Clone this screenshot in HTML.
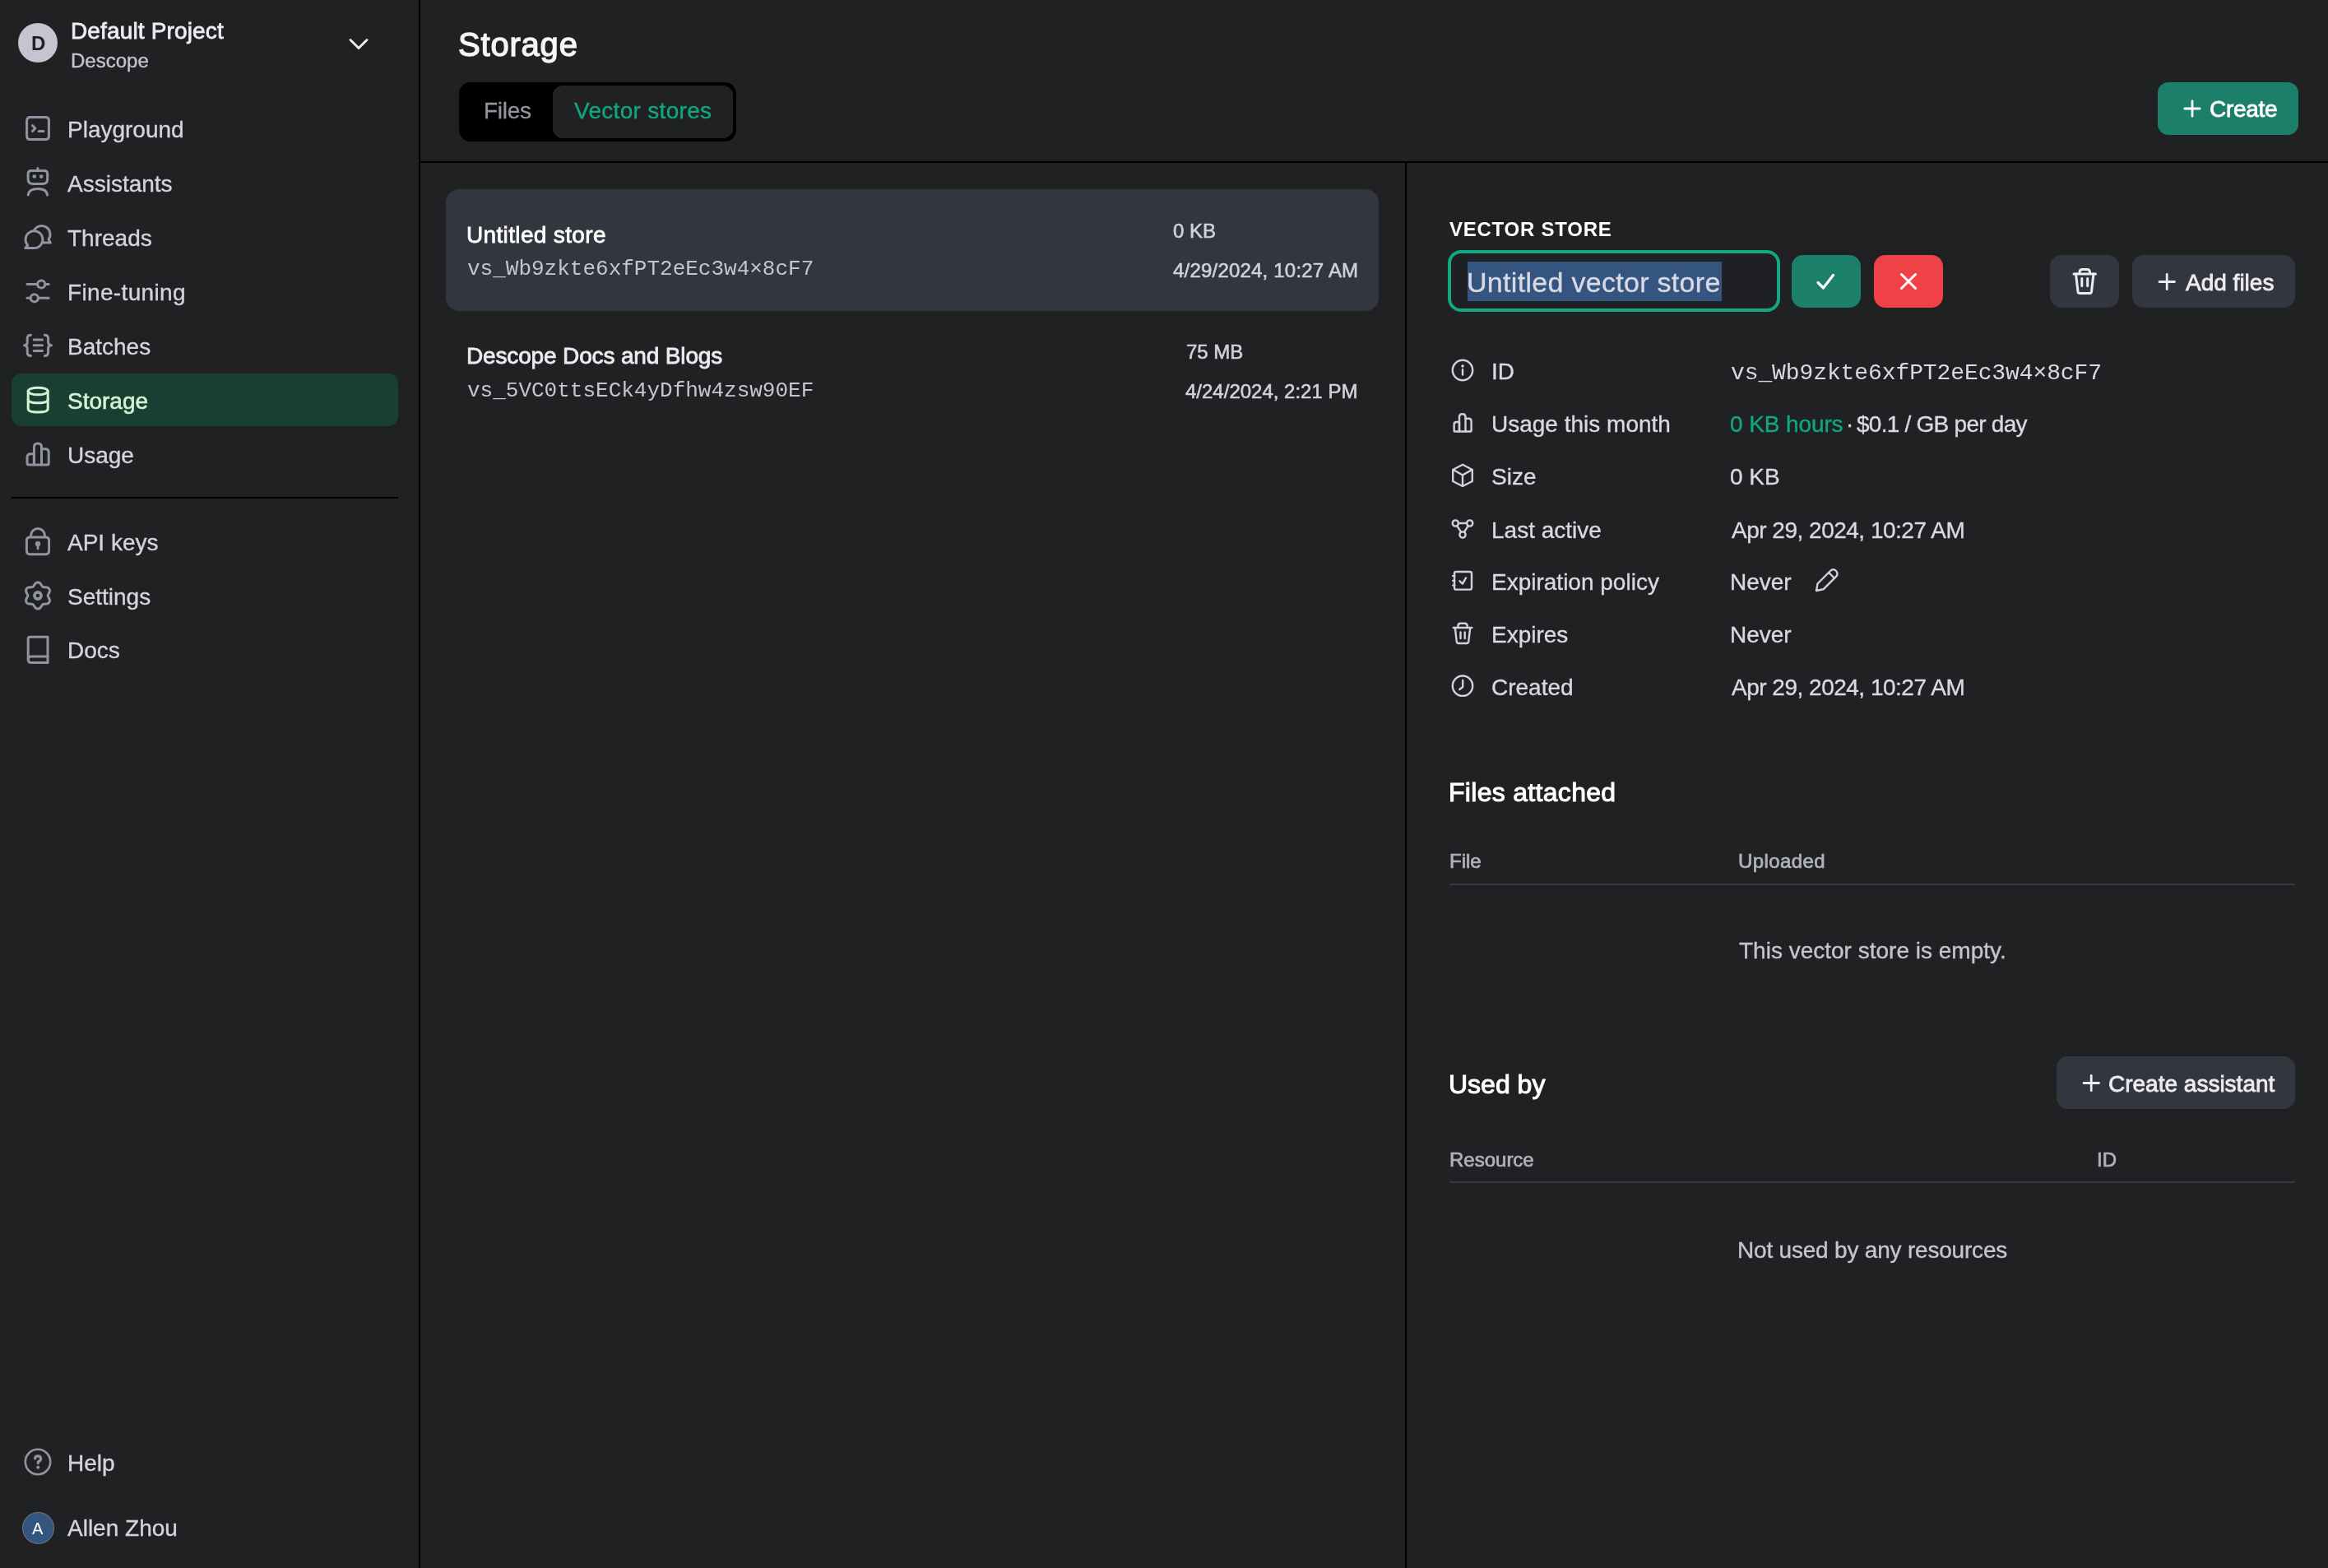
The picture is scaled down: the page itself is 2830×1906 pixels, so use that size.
<!DOCTYPE html>
<html><head><meta charset="utf-8"><title>Storage</title>
<style>
html,body{margin:0;padding:0;}
body{width:2830px;height:1906px;background:#202123;position:relative;overflow:hidden;font-family:"Liberation Sans",sans-serif;}
.t{position:absolute;white-space:nowrap;line-height:1;will-change:transform;}
.r{position:absolute;}
svg{position:absolute;left:0;top:0;}
</style></head><body>
<div class="r" style="left:509px;top:0px;width:2px;height:1906px;background:#000;border-radius:0px;"></div>
<div class="r" style="left:511px;top:196px;width:2319px;height:2px;background:#000;border-radius:0px;"></div>
<div class="r" style="left:1708px;top:198px;width:2px;height:1708px;background:#000;border-radius:0px;"></div>
<div class="r" style="left:22px;top:28px;width:48px;height:48px;border-radius:50%;background:#c5c5d2;"></div>
<div class="t" style="left:38.0px;top:40.7px;font-size:24px;color:#202123;font-weight:700;font-family:'Liberation Sans', sans-serif;">D</div>
<div class="t" style="left:86.0px;top:24.0px;font-size:28px;color:#ececf1;font-weight:400;font-family:'Liberation Sans', sans-serif;letter-spacing:0.15px;-webkit-text-stroke:0.8px #ececf1;">Default Project</div>
<div class="t" style="left:86.0px;top:61.5px;font-size:24px;color:#c5c5d2;font-weight:400;font-family:'Liberation Sans', sans-serif;-webkit-text-stroke:0.35px #c5c5d2;">Descope</div>
<div class="r" style="left:14px;top:454px;width:470px;height:64px;background:#193f32;border-radius:12px;"></div>
<div class="t" style="left:82.0px;top:144.4px;font-size:28px;color:#d4d4de;font-weight:400;font-family:'Liberation Sans', sans-serif;-webkit-text-stroke:0.35px #d4d4de;">Playground</div>
<div class="t" style="left:82.0px;top:209.9px;font-size:28px;color:#d4d4de;font-weight:400;font-family:'Liberation Sans', sans-serif;-webkit-text-stroke:0.35px #d4d4de;">Assistants</div>
<div class="t" style="left:82.0px;top:275.9px;font-size:28px;color:#d4d4de;font-weight:400;font-family:'Liberation Sans', sans-serif;-webkit-text-stroke:0.35px #d4d4de;">Threads</div>
<div class="t" style="left:82.0px;top:341.9px;font-size:28px;color:#d4d4de;font-weight:400;font-family:'Liberation Sans', sans-serif;letter-spacing:0.35px;-webkit-text-stroke:0.35px #d4d4de;">Fine-tuning</div>
<div class="t" style="left:82.0px;top:407.9px;font-size:28px;color:#d4d4de;font-weight:400;font-family:'Liberation Sans', sans-serif;-webkit-text-stroke:0.35px #d4d4de;">Batches</div>
<div class="t" style="left:82.0px;top:473.9px;font-size:28px;color:#d2f4d3;font-weight:400;font-family:'Liberation Sans', sans-serif;-webkit-text-stroke:0.6px #d2f4d3;">Storage</div>
<div class="t" style="left:82.0px;top:539.9px;font-size:28px;color:#d4d4de;font-weight:400;font-family:'Liberation Sans', sans-serif;-webkit-text-stroke:0.35px #d4d4de;">Usage</div>
<div class="t" style="left:82.0px;top:645.9px;font-size:28px;color:#d4d4de;font-weight:400;font-family:'Liberation Sans', sans-serif;-webkit-text-stroke:0.35px #d4d4de;">API keys</div>
<div class="t" style="left:82.0px;top:711.6px;font-size:28px;color:#d4d4de;font-weight:400;font-family:'Liberation Sans', sans-serif;-webkit-text-stroke:0.35px #d4d4de;">Settings</div>
<div class="t" style="left:82.0px;top:777.3px;font-size:28px;color:#d4d4de;font-weight:400;font-family:'Liberation Sans', sans-serif;-webkit-text-stroke:0.35px #d4d4de;">Docs</div>
<div class="t" style="left:82.0px;top:1764.9px;font-size:28px;color:#d4d4de;font-weight:400;font-family:'Liberation Sans', sans-serif;-webkit-text-stroke:0.35px #d4d4de;">Help</div>
<div class="t" style="left:82.0px;top:1843.8px;font-size:28px;color:#d4d4de;font-weight:400;font-family:'Liberation Sans', sans-serif;-webkit-text-stroke:0.35px #d4d4de;">Allen Zhou</div>
<div class="r" style="left:14px;top:604px;width:470px;height:2px;background:#000;border-radius:0px;"></div>
<div class="r" style="left:26.5px;top:1837.5px;width:39px;height:39px;border-radius:50%;background:#34557e;box-shadow:inset 0 0 0 1px #6b6b78;"></div>
<div class="t" style="left:39.0px;top:1848.1px;font-size:20px;color:#ffffff;font-weight:400;font-family:'Liberation Sans', sans-serif;">A</div>
<div class="t" style="left:557.0px;top:34.4px;font-size:40px;color:#f5f5f5;font-weight:400;font-family:'Liberation Sans', sans-serif;letter-spacing:0.8px;-webkit-text-stroke:1.3px #f5f5f5;">Storage</div>
<div class="r" style="left:558px;top:100px;width:337px;height:72px;background:#000;border-radius:14px;"></div>
<div class="r" style="left:672px;top:104px;width:219px;height:64px;background:#202123;border-radius:12px;"></div>
<div class="t" style="left:588.0px;top:121.3px;font-size:28px;color:#9293a0;font-weight:400;font-family:'Liberation Sans', sans-serif;letter-spacing:-0.3px;-webkit-text-stroke:0.35px #9293a0;">Files</div>
<div class="t" style="left:698.0px;top:121.3px;font-size:28px;color:#10a882;font-weight:400;font-family:'Liberation Sans', sans-serif;letter-spacing:0.3px;-webkit-text-stroke:0.35px #10a882;">Vector stores</div>
<div class="r" style="left:2623px;top:100px;width:171px;height:64px;background:#1b7f69;border-radius:13px;"></div>
<div class="t" style="left:2686.0px;top:119.3px;font-size:28px;color:#ffffff;font-weight:400;font-family:'Liberation Sans', sans-serif;letter-spacing:-0.3px;-webkit-text-stroke:0.8px #ffffff;">Create</div>
<div class="r" style="left:542px;top:230px;width:1134px;height:148px;background:#33363f;border-radius:16px;"></div>
<div class="t" style="left:567.0px;top:271.7px;font-size:28px;color:#ffffff;font-weight:400;font-family:'Liberation Sans', sans-serif;letter-spacing:0.35px;-webkit-text-stroke:0.8px #ffffff;">Untitled store</div>
<div class="t" style="left:568.0px;top:314.1px;font-size:26px;color:#c5c5d2;font-weight:400;font-family:'Liberation Mono', monospace;">vs_Wb9zkte6xfPT2eEc3w4×8cF7</div>
<div class="t" style="left:1426.0px;top:268.5px;font-size:24px;color:#d1d1db;font-weight:400;font-family:'Liberation Sans', sans-serif;-webkit-text-stroke:0.6px #d1d1db;">0 KB</div>
<div class="t" style="left:1425.5px;top:316.7px;font-size:24px;color:#d1d1db;font-weight:400;font-family:'Liberation Sans', sans-serif;letter-spacing:0.2px;-webkit-text-stroke:0.6px #d1d1db;">4/29/2024, 10:27 AM</div>
<div class="t" style="left:567.0px;top:419.3px;font-size:28px;color:#ececf1;font-weight:400;font-family:'Liberation Sans', sans-serif;letter-spacing:-0.15px;-webkit-text-stroke:0.8px #ececf1;">Descope Docs and Blogs</div>
<div class="t" style="left:568.0px;top:462.3px;font-size:26px;color:#c5c5d2;font-weight:400;font-family:'Liberation Mono', monospace;">vs_5VC0ttsECk4yDfhw4zsw90EF</div>
<div class="t" style="left:1441.5px;top:416.4px;font-size:24px;color:#d1d1db;font-weight:400;font-family:'Liberation Sans', sans-serif;-webkit-text-stroke:0.6px #d1d1db;">75 MB</div>
<div class="t" style="left:1441.0px;top:464.4px;font-size:24px;color:#d1d1db;font-weight:400;font-family:'Liberation Sans', sans-serif;-webkit-text-stroke:0.6px #d1d1db;">4/24/2024, 2:21 PM</div>
<div class="t" style="left:1762.0px;top:266.7px;font-size:24px;color:#ffffff;font-weight:700;font-family:'Liberation Sans', sans-serif;letter-spacing:0.75px;">VECTOR STORE</div>
<div class="r" style="left:1760px;top:304px;width:404px;height:75px;border:4px solid #12a882;border-radius:16px;box-sizing:border-box;background:#1f2023;"></div>
<div class="r" style="left:1784px;top:318px;width:309px;height:48px;background:#345580;border-radius:0px;"></div>
<div class="t" style="left:1783.0px;top:325.7px;font-size:34px;color:#d9d9e3;font-weight:400;font-family:'Liberation Sans', sans-serif;letter-spacing:0.3px;-webkit-text-stroke:0.35px #d9d9e3;">Untitled vector store</div>
<div class="r" style="left:2178px;top:310px;width:84px;height:64px;background:#1b7f69;border-radius:14px;"></div>
<div class="r" style="left:2278px;top:310px;width:84px;height:64px;background:#ef4146;border-radius:14px;"></div>
<div class="r" style="left:2492px;top:310px;width:84px;height:64px;background:#33363f;border-radius:14px;"></div>
<div class="r" style="left:2592px;top:310px;width:198px;height:64px;background:#33363f;border-radius:14px;"></div>
<div class="t" style="left:2657.0px;top:329.6px;font-size:28px;color:#ececf1;font-weight:400;font-family:'Liberation Sans', sans-serif;-webkit-text-stroke:0.8px #ececf1;">Add files</div>
<div class="t" style="left:1813.0px;top:438.3px;font-size:28px;color:#d9d9e3;font-weight:400;font-family:'Liberation Sans', sans-serif;-webkit-text-stroke:0.35px #d9d9e3;">ID</div>
<div class="t" style="left:1813.0px;top:502.3px;font-size:28px;color:#d9d9e3;font-weight:400;font-family:'Liberation Sans', sans-serif;-webkit-text-stroke:0.35px #d9d9e3;">Usage this month</div>
<div class="t" style="left:1813.0px;top:566.3px;font-size:28px;color:#d9d9e3;font-weight:400;font-family:'Liberation Sans', sans-serif;-webkit-text-stroke:0.35px #d9d9e3;">Size</div>
<div class="t" style="left:1813.0px;top:631.3px;font-size:28px;color:#d9d9e3;font-weight:400;font-family:'Liberation Sans', sans-serif;-webkit-text-stroke:0.35px #d9d9e3;">Last active</div>
<div class="t" style="left:1813.0px;top:694.3px;font-size:28px;color:#d9d9e3;font-weight:400;font-family:'Liberation Sans', sans-serif;-webkit-text-stroke:0.35px #d9d9e3;">Expiration policy</div>
<div class="t" style="left:1813.0px;top:758.3px;font-size:28px;color:#d9d9e3;font-weight:400;font-family:'Liberation Sans', sans-serif;-webkit-text-stroke:0.35px #d9d9e3;">Expires</div>
<div class="t" style="left:1813.0px;top:822.3px;font-size:28px;color:#d9d9e3;font-weight:400;font-family:'Liberation Sans', sans-serif;-webkit-text-stroke:0.35px #d9d9e3;">Created</div>
<div class="t" style="left:2104.0px;top:439.5px;font-size:28px;color:#d9d9e3;font-weight:400;font-family:'Liberation Mono', monospace;letter-spacing:-0.1px;">vs_Wb9zkte6xfPT2eEc3w4×8cF7</div>
<div class="t" style="left:2103.0px;top:502.3px;font-size:28px;color:#10a882;font-weight:400;font-family:'Liberation Sans', sans-serif;letter-spacing:-0.1px;-webkit-text-stroke:0.35px #10a882;">0 KB hours</div>
<div class="t" style="left:2244.0px;top:502.3px;font-size:28px;color:#d9d9e3;font-weight:400;font-family:'Liberation Sans', sans-serif;-webkit-text-stroke:0.35px #d9d9e3;">·</div>
<div class="t" style="left:2256.5px;top:502.3px;font-size:28px;color:#d9d9e3;font-weight:400;font-family:'Liberation Sans', sans-serif;letter-spacing:-0.75px;-webkit-text-stroke:0.35px #d9d9e3;">$0.1 / GB per day</div>
<div class="t" style="left:2103.0px;top:566.3px;font-size:28px;color:#d9d9e3;font-weight:400;font-family:'Liberation Sans', sans-serif;-webkit-text-stroke:0.35px #d9d9e3;">0 KB</div>
<div class="t" style="left:2105.0px;top:631.3px;font-size:28px;color:#d9d9e3;font-weight:400;font-family:'Liberation Sans', sans-serif;letter-spacing:-0.5px;-webkit-text-stroke:0.35px #d9d9e3;">Apr 29, 2024, 10:27 AM</div>
<div class="t" style="left:2103.0px;top:694.3px;font-size:28px;color:#d9d9e3;font-weight:400;font-family:'Liberation Sans', sans-serif;-webkit-text-stroke:0.35px #d9d9e3;">Never</div>
<div class="t" style="left:2103.0px;top:758.3px;font-size:28px;color:#d9d9e3;font-weight:400;font-family:'Liberation Sans', sans-serif;-webkit-text-stroke:0.35px #d9d9e3;">Never</div>
<div class="t" style="left:2105.0px;top:822.3px;font-size:28px;color:#d9d9e3;font-weight:400;font-family:'Liberation Sans', sans-serif;letter-spacing:-0.5px;-webkit-text-stroke:0.35px #d9d9e3;">Apr 29, 2024, 10:27 AM</div>
<div class="t" style="left:1761.0px;top:947.4px;font-size:32px;color:#ffffff;font-weight:400;font-family:'Liberation Sans', sans-serif;letter-spacing:0.3px;-webkit-text-stroke:1.0px #ffffff;">Files attached</div>
<div class="t" style="left:1762.0px;top:1034.5px;font-size:24px;color:#b0b2bc;font-weight:400;font-family:'Liberation Sans', sans-serif;-webkit-text-stroke:0.7px #b0b2bc;">File</div>
<div class="t" style="left:2113.0px;top:1034.5px;font-size:24px;color:#b0b2bc;font-weight:400;font-family:'Liberation Sans', sans-serif;letter-spacing:0.4px;-webkit-text-stroke:0.7px #b0b2bc;">Uploaded</div>
<div class="r" style="left:1762px;top:1074px;width:1028px;height:2px;background:#353945;border-radius:0px;"></div>
<div class="t" style="left:2114.0px;top:1142.1px;font-size:28px;color:#c5c5d2;font-weight:400;font-family:'Liberation Sans', sans-serif;-webkit-text-stroke:0.35px #c5c5d2;">This vector store is empty.</div>
<div class="t" style="left:1761.0px;top:1302.2px;font-size:32px;color:#ffffff;font-weight:400;font-family:'Liberation Sans', sans-serif;-webkit-text-stroke:1.0px #ffffff;">Used by</div>
<div class="r" style="left:2500px;top:1284px;width:290px;height:64px;background:#33363f;border-radius:14px;"></div>
<div class="t" style="left:2563.0px;top:1304.3px;font-size:28px;color:#ececf1;font-weight:400;font-family:'Liberation Sans', sans-serif;-webkit-text-stroke:0.8px #ececf1;">Create assistant</div>
<div class="t" style="left:1762.0px;top:1397.5px;font-size:24px;color:#b0b2bc;font-weight:400;font-family:'Liberation Sans', sans-serif;-webkit-text-stroke:0.7px #b0b2bc;">Resource</div>
<div class="t" style="left:2549.0px;top:1397.5px;font-size:24px;color:#b0b2bc;font-weight:400;font-family:'Liberation Sans', sans-serif;-webkit-text-stroke:0.7px #b0b2bc;">ID</div>
<div class="r" style="left:1762px;top:1436px;width:1028px;height:2px;background:#353945;border-radius:0px;"></div>
<div class="t" style="left:2112.0px;top:1506.3px;font-size:28px;color:#c5c5d2;font-weight:400;font-family:'Liberation Sans', sans-serif;letter-spacing:-0.2px;-webkit-text-stroke:0.35px #c5c5d2;">Not used by any resources</div>
<svg width="2830" height="1906" viewBox="0 0 2830 1906">
<path d="M426 48.5 L436 58.5 L446 48.5" fill="none" stroke="#ececf1" stroke-width="3" stroke-linecap="round" stroke-linejoin="round" />
<path d="M36.6 142.6 H55.4 Q59.4 142.6 59.4 146.6 V165.4 Q59.4 169.4 55.4 169.4 H36.6 Q32.6 169.4 32.6 165.4 V146.6 Q32.6 142.6 36.6 142.6 Z" fill="none" stroke="#9293a0" stroke-width="3" stroke-linecap="round" stroke-linejoin="round" />
<path d="M39.5 152.6 L42.8 156 L39.5 159.5" fill="none" stroke="#9293a0" stroke-width="3" stroke-linecap="round" stroke-linejoin="round" />
<path d="M47.2 159.5 H52.9" fill="none" stroke="#9293a0" stroke-width="3" stroke-linecap="round" stroke-linejoin="round" />
<path d="M38.1 207.6 H53.7 Q57.7 207.6 57.7 211.6 V217.4 Q57.7 223.4 51.7 223.4 H40.1 Q34.1 223.4 34.1 217.4 V211.6 Q34.1 207.6 38.1 207.6 Z" fill="none" stroke="#9293a0" stroke-width="3" stroke-linecap="round" stroke-linejoin="round" />
<path d="M45.9 204.5 V206" fill="none" stroke="#9293a0" stroke-width="3" stroke-linecap="round" stroke-linejoin="round" />
<circle cx="41.8" cy="214.5" r="1.6" fill="#9293a0" stroke="#9293a0" stroke-width="1.5"/>
<circle cx="50.2" cy="214.5" r="1.6" fill="#9293a0" stroke="#9293a0" stroke-width="1.5"/>
<path d="M34.2 237 Q35 229.5 45.9 229.5 Q56.8 229.5 57.5 237" fill="none" stroke="#9293a0" stroke-width="3" stroke-linecap="round" stroke-linejoin="round" />
<path d="M41.5 301.6 A10.4 10.4 0 1 0 33.8 298.2 L30.8 301.6 Z" fill="none" stroke="#9293a0" stroke-width="3" stroke-linecap="round" stroke-linejoin="round" />
<path d="M41.4 280 A10.4 10.4 0 1 1 59.0 291.0 L61.4 295.1 H51.2" fill="none" stroke="#9293a0" stroke-width="3" stroke-linecap="round" stroke-linejoin="round" />
<path d="M33 345.5 H45.6 M54.8 345.5 H59.1" fill="none" stroke="#9293a0" stroke-width="3" stroke-linecap="round" stroke-linejoin="round" />
<circle cx="50.2" cy="345.5" r="4.6" fill="none" stroke="#9293a0" stroke-width="3"/>
<path d="M33 362.3 H37.2 M46.4 362.3 H59.1" fill="none" stroke="#9293a0" stroke-width="3" stroke-linecap="round" stroke-linejoin="round" />
<circle cx="41.8" cy="362.3" r="4.6" fill="none" stroke="#9293a0" stroke-width="3"/>
<path d="M37.5 407.2 Q33.2 407.2 33.2 411.5 V416 Q33.2 419.7 29.5 419.7 Q33.2 419.7 33.2 423.4 V428 Q33.2 432.5 37.5 432.5" fill="none" stroke="#9293a0" stroke-width="3" stroke-linecap="round" stroke-linejoin="round" />
<path d="M54.3 407.2 Q58.6 407.2 58.6 411.5 V416 Q58.6 419.7 62.5 419.7 Q58.6 419.7 58.6 423.4 V428 Q58.6 432.5 54.3 432.5" fill="none" stroke="#9293a0" stroke-width="3" stroke-linecap="round" stroke-linejoin="round" />
<path d="M41.2 413.1 H51.5 M41.2 419.7 H51.5 M41.2 426.5 H51.5" fill="none" stroke="#9293a0" stroke-width="3" stroke-linecap="round" stroke-linejoin="round" />
<ellipse cx="46.2" cy="475.5" rx="12" ry="4.3" fill="none" stroke="#d2f4d3" stroke-width="3"/>
<path d="M34.2 475.5 V497 Q34.2 501 46.2 501 Q58.2 501 58.2 497 V475.5" fill="none" stroke="#d2f4d3" stroke-width="3" stroke-linecap="round" stroke-linejoin="round" />
<path d="M34.2 485.5 Q34.2 489.8 46.2 489.8 Q58.2 489.8 58.2 485.5" fill="none" stroke="#d2f4d3" stroke-width="3" stroke-linecap="round" stroke-linejoin="round" />
<path d="M37.2 551.8 H41.4 V565 H35 Q33 565 33 563 V556 Q33 551.8 37.2 551.8 Z" fill="none" stroke="#9293a0" stroke-width="3" stroke-linecap="round" stroke-linejoin="round" />
<path d="M46 539 Q50.5 539 50.5 543.5 V565 H41.4 V543.5 Q41.4 539 46 539 Z" fill="none" stroke="#9293a0" stroke-width="3" stroke-linecap="round" stroke-linejoin="round" />
<path d="M50.5 545.8 H55.2 Q59.2 545.8 59.2 549.8 V563 Q59.2 565 57.2 565 H50.5" fill="none" stroke="#9293a0" stroke-width="3" stroke-linecap="round" stroke-linejoin="round" />
<path d="M36.5 653 H55.5 Q59.6 653 59.6 657 V669.6 Q59.6 673.7 55.5 673.7 H36.5 Q32.4 673.7 32.4 669.6 V657 Q32.4 653 36.5 653 Z" fill="none" stroke="#9293a0" stroke-width="3" stroke-linecap="round" stroke-linejoin="round" />
<path d="M37.5 652.5 V651 A8.5 8.5 0 0 1 54.5 651 V652.5" fill="none" stroke="#9293a0" stroke-width="3" stroke-linecap="round" stroke-linejoin="round" />
<circle cx="46" cy="661" r="3.0" fill="#9293a0" stroke="#9293a0" stroke-width="0.6"/>
<path d="M46 662 V667" fill="none" stroke="#9293a0" stroke-width="2.8" stroke-linecap="round" stroke-linejoin="round" />
<path d="M46.00 708.00 L46.70 708.05 L47.38 708.22 L48.04 708.49 L48.67 708.88 L49.23 709.41 L49.65 710.38 L50.15 710.83 L50.58 711.43 L50.95 712.05 L51.30 712.63 L51.67 713.10 L52.10 713.43 L52.60 713.63 L53.20 713.72 L53.87 713.74 L54.60 713.75 L55.33 713.82 L55.97 714.03 L57.02 713.90 L57.76 714.13 L58.41 714.48 L58.98 714.91 L59.46 715.42 L59.86 716.00 L60.16 716.63 L60.36 717.30 L60.45 718.01 L60.43 718.75 L60.25 719.51 L59.62 720.35 L59.49 721.01 L59.18 721.68 L58.82 722.31 L58.50 722.91 L58.28 723.46 L58.20 724.00 L58.28 724.54 L58.50 725.09 L58.82 725.69 L59.18 726.32 L59.49 726.99 L59.62 727.65 L60.25 728.49 L60.43 729.25 L60.45 729.99 L60.36 730.70 L60.16 731.37 L59.86 732.00 L59.46 732.58 L58.98 733.09 L58.41 733.52 L57.76 733.87 L57.02 734.10 L55.97 733.97 L55.33 734.18 L54.60 734.25 L53.87 734.26 L53.20 734.28 L52.60 734.37 L52.10 734.57 L51.67 734.90 L51.30 735.37 L50.95 735.95 L50.58 736.57 L50.15 737.17 L49.65 737.62 L49.23 738.59 L48.67 739.12 L48.04 739.51 L47.38 739.78 L46.70 739.95 L46.00 740.00 L45.30 739.95 L44.62 739.78 L43.96 739.51 L43.33 739.12 L42.77 738.59 L42.35 737.62 L41.85 737.17 L41.42 736.57 L41.05 735.95 L40.70 735.37 L40.33 734.90 L39.90 734.57 L39.40 734.37 L38.80 734.28 L38.13 734.26 L37.40 734.25 L36.67 734.18 L36.03 733.97 L34.98 734.10 L34.24 733.87 L33.59 733.52 L33.02 733.09 L32.54 732.58 L32.14 732.00 L31.84 731.37 L31.64 730.70 L31.55 729.99 L31.57 729.25 L31.75 728.49 L32.38 727.65 L32.51 726.99 L32.82 726.32 L33.18 725.69 L33.50 725.09 L33.72 724.54 L33.80 724.00 L33.72 723.46 L33.50 722.91 L33.18 722.31 L32.82 721.68 L32.51 721.01 L32.38 720.35 L31.75 719.51 L31.57 718.75 L31.55 718.01 L31.64 717.30 L31.84 716.63 L32.14 716.00 L32.54 715.42 L33.02 714.91 L33.59 714.48 L34.24 714.13 L34.98 713.90 L36.03 714.03 L36.67 713.82 L37.40 713.75 L38.13 713.74 L38.80 713.72 L39.40 713.63 L39.90 713.43 L40.33 713.10 L40.70 712.63 L41.05 712.05 L41.42 711.43 L41.85 710.83 L42.35 710.38 L42.77 709.41 L43.33 708.88 L43.96 708.49 L44.62 708.22 L45.30 708.05 L46.00 708.00 Z" fill="none" stroke="#9293a0" stroke-width="3" stroke-linecap="round" stroke-linejoin="round" />
<circle cx="46" cy="724" r="4.1" fill="none" stroke="#9293a0" stroke-width="3.6"/>
<path d="M36.5 774.3 H58 V805.5 H38 Q34.2 805.5 34.2 801.7 V776.6 Q34.2 774.3 36.5 774.3 Z" fill="none" stroke="#9293a0" stroke-width="3" stroke-linecap="round" stroke-linejoin="round" />
<path d="M34.2 801.7 Q34.2 797.9 38 797.9 H58" fill="none" stroke="#9293a0" stroke-width="3" stroke-linecap="round" stroke-linejoin="round" />
<circle cx="46" cy="1777" r="15.2" fill="none" stroke="#9293a0" stroke-width="2.6"/>
<path d="M42.6 1773 Q42.6 1769.8 46 1769.8 Q49.6 1769.8 49.6 1773 Q49.6 1775.5 46.3 1777 V1778.6" fill="none" stroke="#9293a0" stroke-width="3.2" stroke-linecap="round" stroke-linejoin="round" />
<circle cx="46.2" cy="1783.6" r="1.6" fill="#9293a0" stroke="#9293a0" stroke-width="1"/>
<path d="M2655.8 132 H2674.2 M2665 122.8 V141.2" fill="none" stroke="#ffffff" stroke-width="2.8" stroke-linecap="round" stroke-linejoin="round" />
<path d="M2210 343.5 L2216.5 350 L2228.5 334.5" fill="none" stroke="#ffffff" stroke-width="3.2" stroke-linecap="round" stroke-linejoin="round" />
<path d="M2311.5 333.5 L2328.5 350.5 M2328.5 333.5 L2311.5 350.5" fill="none" stroke="#ffffff" stroke-width="3.0" stroke-linecap="round" stroke-linejoin="round" />
<path d="M2521 333 H2547.5" fill="none" stroke="#ececf1" stroke-width="3.0" stroke-linecap="round" stroke-linejoin="round" />
<path d="M2528 332.5 V331 Q2528 327.5 2531.5 327.5 H2537 Q2540.5 327.5 2540.5 331 V332.5" fill="none" stroke="#ececf1" stroke-width="3.0" stroke-linecap="round" stroke-linejoin="round" />
<path d="M2523.5 333 L2526 354.5 Q2526.3 356.5 2528.3 356.5 H2540.2 Q2542.2 356.5 2542.5 354.5 L2545 333" fill="none" stroke="#ececf1" stroke-width="3.0" stroke-linecap="round" stroke-linejoin="round" />
<path d="M2530.8 338.5 V347.5 M2537.7 338.5 V347.5" fill="none" stroke="#ececf1" stroke-width="3.0" stroke-linecap="round" stroke-linejoin="round" />
<path d="M2625 342.5 H2643.5 M2634.2 333.3 V351.7" fill="none" stroke="#ececf1" stroke-width="2.8" stroke-linecap="round" stroke-linejoin="round" />
<circle cx="1778" cy="450" r="12.2" fill="none" stroke="#d1d1db" stroke-width="2.4"/>
<circle cx="1778" cy="445" r="1.3" fill="#d1d1db" stroke="#d1d1db" stroke-width="1"/>
<path d="M1778 449 V455.5" fill="none" stroke="#d1d1db" stroke-width="2.4" stroke-linecap="round" stroke-linejoin="round" />
<path d="M1770.5 513 H1774 V524.5 H1768.5 Q1767.6 524.5 1767.6 523.5 V516 Q1767.6 513 1770.5 513 Z" fill="none" stroke="#d1d1db" stroke-width="2.4" stroke-linecap="round" stroke-linejoin="round" />
<path d="M1777.8 503.2 Q1781.5 503.2 1781.5 507 V524.5 H1774 V507 Q1774 503.2 1777.8 503.2 Z" fill="none" stroke="#d1d1db" stroke-width="2.4" stroke-linecap="round" stroke-linejoin="round" />
<path d="M1781.5 508.8 H1785.5 Q1788.6 508.8 1788.6 512 V523.5 Q1788.6 524.5 1787.6 524.5 H1781.5" fill="none" stroke="#d1d1db" stroke-width="2.4" stroke-linecap="round" stroke-linejoin="round" />
<path d="M1778 564.7 L1789.8 571 V585 L1778 591 L1766.2 585 V571 Z" fill="none" stroke="#d1d1db" stroke-width="2.4" stroke-linecap="round" stroke-linejoin="round" />
<path d="M1766.5 571 L1778 577.5 L1789.5 571 M1778 577.5 V590.5" fill="none" stroke="#d1d1db" stroke-width="2.4" stroke-linecap="round" stroke-linejoin="round" />
<circle cx="1769.3" cy="636" r="3.6" fill="none" stroke="#d1d1db" stroke-width="2.4"/>
<circle cx="1786.7" cy="636" r="3.6" fill="none" stroke="#d1d1db" stroke-width="2.4"/>
<circle cx="1778" cy="650" r="3.6" fill="none" stroke="#d1d1db" stroke-width="2.4"/>
<path d="M1773 636 H1783 M1771.2 639.2 L1776.2 646.8 M1784.8 639.2 L1779.8 646.8" fill="none" stroke="#d1d1db" stroke-width="2.4" stroke-linecap="round" stroke-linejoin="round" />
<path d="M1770.2 695 H1786.8 Q1789 695 1789 697.2 V714.4 Q1789 716.6 1786.8 716.6 H1770.2 Q1768 716.6 1768 714.4 V697.2 Q1768 695 1770.2 695 Z" fill="none" stroke="#d1d1db" stroke-width="2.4" stroke-linecap="round" stroke-linejoin="round" />
<path d="M1766 700 H1768.5 M1766 705.8 H1768.5 M1766 711.5 H1768.5" fill="none" stroke="#d1d1db" stroke-width="2.2" stroke-linecap="round" stroke-linejoin="round" />
<path d="M1774.5 706.3 L1777.9 709.6 L1782 702.4" fill="none" stroke="#d1d1db" stroke-width="2.4" stroke-linecap="round" stroke-linejoin="round" />
<path d="M1766.8 763 H1789.3" fill="none" stroke="#d1d1db" stroke-width="2.4" stroke-linecap="round" stroke-linejoin="round" />
<path d="M1772.4 762.5 V761 Q1772.4 757.8 1775.6 757.8 H1780.4 Q1783.6 757.8 1783.6 761 V762.5" fill="none" stroke="#d1d1db" stroke-width="2.4" stroke-linecap="round" stroke-linejoin="round" />
<path d="M1768.8 763.2 L1770.8 780 Q1771.1 782 1773.1 782 H1782.9 Q1784.9 782 1785.2 780 L1787.2 763.2" fill="none" stroke="#d1d1db" stroke-width="2.4" stroke-linecap="round" stroke-linejoin="round" />
<path d="M1775.5 768.5 V776 M1780.7 768.5 V776" fill="none" stroke="#d1d1db" stroke-width="2.4" stroke-linecap="round" stroke-linejoin="round" />
<circle cx="1778" cy="833.7" r="12.2" fill="none" stroke="#d1d1db" stroke-width="2.4"/>
<path d="M1778.2 827 V835 L1774.3 838" fill="none" stroke="#d1d1db" stroke-width="2.4" stroke-linecap="round" stroke-linejoin="round" />
<path d="M2208 718 L2209.5 709.5 L2225 694 Q2228.5 690.7 2232 694 Q2235.2 697.4 2232 700.8 L2216.5 716.3 Z" fill="none" stroke="#d1d1db" stroke-width="2.4" stroke-linecap="round" stroke-linejoin="round" />
<path d="M2223.2 696 L2230 702.8" fill="none" stroke="#d1d1db" stroke-width="2.4" stroke-linecap="round" stroke-linejoin="round" />
<path d="M2533 1316.5 H2551.5 M2542.2 1307.3 V1325.7" fill="none" stroke="#ececf1" stroke-width="2.8" stroke-linecap="round" stroke-linejoin="round" />
</svg>
</body></html>
